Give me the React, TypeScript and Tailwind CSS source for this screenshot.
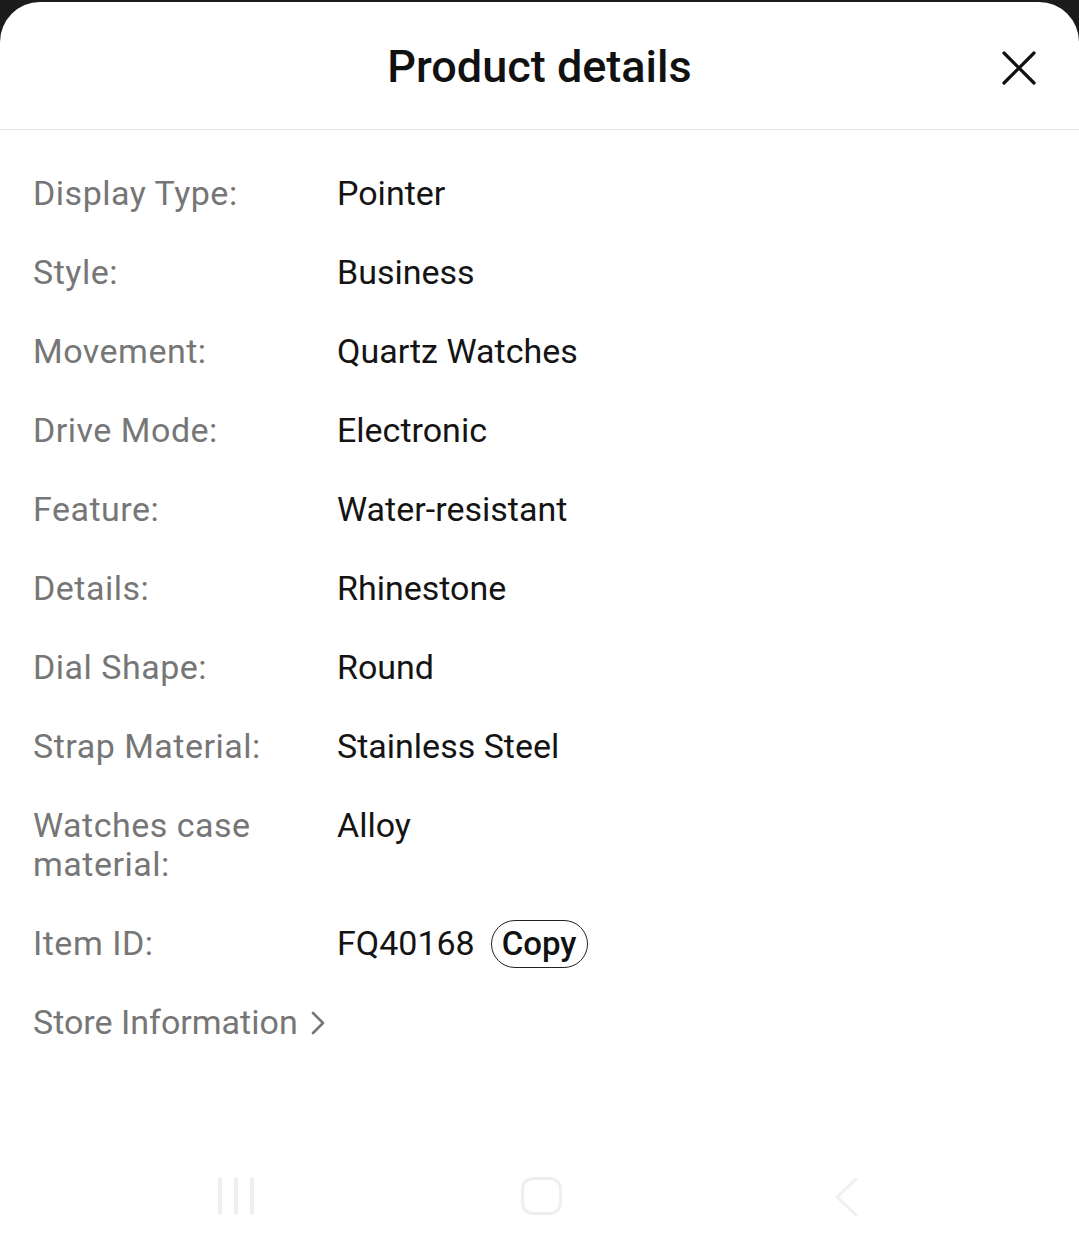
import React from "react";

const rows: { label: string; value: string }[] = [
  { label: "Display Type:", value: "Pointer" },
  { label: "Style:", value: "Business" },
  { label: "Movement:", value: "Quartz Watches" },
  { label: "Drive Mode:", value: "Electronic" },
  { label: "Feature:", value: "Water-resistant" },
  { label: "Details:", value: "Rhinestone" },
  { label: "Dial Shape:", value: "Round" },
  { label: "Strap Material:", value: "Stainless Steel" },
  { label: "Watches case material:", value: "Alloy" },
];

export default function App() {
  return (
    <div className="w-full h-[1253px] bg-[#1c1c1c] pt-[2px] font-['Roboto','Liberation_Sans',sans-serif] overflow-hidden">
      <div className="bg-white rounded-t-[40px] h-[1251px] flex flex-col">
        <div className="relative h-[128px] flex items-center justify-center border-b border-[#e2e2e2]">
          <h1 className="text-[45px] font-medium text-[#111] pt-[2px]">Product details</h1>
          <button className="absolute right-[43px] top-[49px] w-[34px] h-[34px] flex items-center justify-center">
            <svg width="34" height="34" viewBox="0 0 34 34" fill="none">
              <path d="M2 2 L32 32 M32 2 L2 32" stroke="#111" strokeWidth="3.2" strokeLinecap="round" />
            </svg>
          </button>
        </div>

        <div className="pl-[33px] pt-[44px] grid grid-cols-[280px_1fr] gap-x-[24px] gap-y-[40px] text-[34px] leading-[39px]">
          {rows.map((r) => (
            <React.Fragment key={r.label}>
              <div className="text-[#767676] tracking-[0.5px]">{r.label}</div>
              <div className="text-[#141414]">{r.value}</div>
            </React.Fragment>
          ))}
          <div className="text-[#767676] tracking-[0.5px]">Item ID:</div>
          <div className="text-[#141414] flex items-center gap-[16px]">
            <span>FQ40168</span>
            <span className="-my-[5px] h-[48px] px-[10px] inline-flex items-center rounded-full border border-[#222] font-medium text-[#111] text-[33px]">
              Copy
            </span>
          </div>
          <div className="col-span-2 flex items-center text-[#767676]">
            <span>Store Information</span>
            <svg className="ml-[12px]" width="16" height="26" viewBox="0 0 16 26" fill="none">
              <path d="M3 3 L13 13 L3 23" stroke="#767676" strokeWidth="2.6" strokeLinecap="round" strokeLinejoin="round" />
            </svg>
          </div>
        </div>

        <div className="flex-1" />

        <div className="h-[38px] mb-[38px] relative">
          <div className="absolute left-[218px] top-0 flex gap-[12px]">
            <div className="w-[4px] h-[38px] rounded-full bg-[#efefef]" />
            <div className="w-[4px] h-[38px] rounded-full bg-[#efefef]" />
            <div className="w-[4px] h-[38px] rounded-full bg-[#efefef]" />
          </div>
          <div className="absolute left-[521px] top-0 w-[41px] h-[38px] rounded-[12px] border-[3px] border-[#efefef]" />
          <svg className="absolute left-[832px] top-0" width="28" height="40" viewBox="0 0 28 40" fill="none">
            <path d="M24 2 L5 20 L24 38" stroke="#efefef" strokeWidth="3" strokeLinecap="round" strokeLinejoin="round" />
          </svg>
        </div>
      </div>
    </div>
  );
}
